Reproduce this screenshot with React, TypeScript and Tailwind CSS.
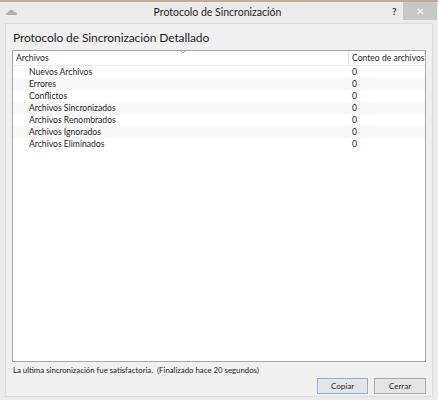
import React from "react";

const rows = [
  "Nuevos Archivos",
  "Errores",
  "Conflictos",
  "Archivos Sincronizados",
  "Archivos Renombrados",
  "Archivos Ignorados",
  "Archivos Eliminados",
];

export default function App() {
  return (
    <div
      className="w-[438px] h-[400px] bg-[#ebebeb] flex flex-col border-t-2 border-[#c9a896] text-[#1e1e1e] overflow-hidden"
      style={{ fontFamily: '"Segoe UI", Lato, "Open Sans", sans-serif' }}
    >
      {/* title bar */}
      <div className="h-[21px] flex items-start relative">
        <div className="pl-[6px] pt-[7px]">
          <svg width="11" height="6" viewBox="0 0 11 6">
            <path d="M1 6 Q0 6 0 5 Q0 3.5 2 3.5 Q2.5 1 5 1 Q7.5 0.5 8.5 3 Q11 3 11 5 Q11 6 10 6 Z" fill="#a9b0b8" />
          </svg>
        </div>
        <div className="flex-1 text-center text-[10.5px] leading-[20px] pl-[26px]">Protocolo de Sincronización</div>
        <div className="w-[10px] text-[10px] font-bold leading-[18px] text-[#333]">?</div>
        <div className="w-[34px] h-[18px] bg-[#c7c7c7] ml-[1px] mr-[1px] flex items-center justify-center text-white text-[10px] leading-none">✕</div>
      </div>

      {/* body panel */}
      <div className="flex-1 mx-[5px] mb-[3px] border border-[#dcdcdc] bg-[#f0f0f0] flex flex-col px-[6px]">
        <div className="text-[12px] tracking-[-0.1px] leading-[18px] pt-[5px] pb-[3px] pl-[1px]">Protocolo de Sincronización Detallado</div>

        <div className="h-[312px] border border-[#a6a6a6] bg-white flex flex-col relative text-[8.6px]">
          <div className="absolute left-[167px] top-[-1px]">
            <svg width="6" height="4" viewBox="0 0 6 4">
              <path d="M0.5 0.5 L3 3 L5.5 0.5" fill="none" stroke="#8aa8c8" strokeWidth="1" />
            </svg>
          </div>
          <div className="flex h-[15px] leading-[15px] border-b border-[#ececec]">
            <div className="w-[336px] pl-[3px] border-r border-[#e3e3e3]">Archivos</div>
            <div className="pl-[3px] whitespace-nowrap overflow-hidden">Conteo de archivos</div>
          </div>
          {rows.map((r, i) => (
            <div key={r} className={`flex h-[12px] leading-[12px] ${i % 2 === 1 ? "bg-[#f7f7f7]" : "bg-white"}`}>
              <div className="w-[336px] pl-[16px]">{r}</div>
              <div className="pl-[3px]">0</div>
            </div>
          ))}
        </div>

        <div className="text-[7.8px] leading-[12px] pt-[2px] pl-[1px] whitespace-pre">
          La ultima sincronización fue satisfactoria.  (Finalizado hace 20 segundos)
        </div>

        <div className="flex justify-end gap-[6px] pt-[2px]">
          <button className="w-[51px] h-[16px] border border-[#7eb4ea] bg-[#e5e5e5] text-[8px] leading-[14px]">Copiar</button>
          <button className="w-[52px] h-[16px] border border-[#acacac] bg-[#e5e5e5] text-[8px] leading-[14px]">Cerrar</button>
        </div>
      </div>
    </div>
  );
}
